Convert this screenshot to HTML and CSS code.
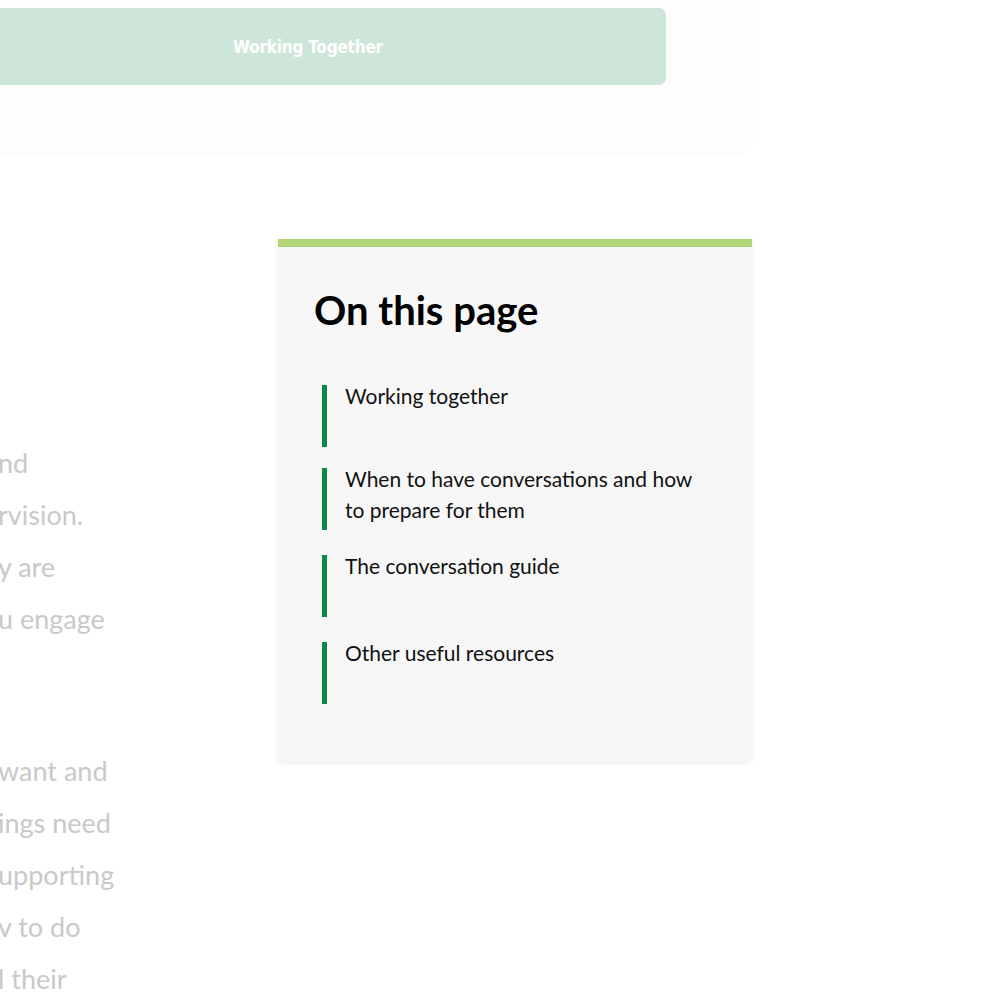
FILE: index.html
```html
<!DOCTYPE html>
<html lang="en">
<head>
    <meta charset="UTF-8">
    <meta name="viewport" content="width=device-width, initial-scale=1.0">
    <title>Working Together</title>
    <link rel="stylesheet" href="styles.css">
</head>
<body>
    <!-- Hero card -->
    <section class="hero">
        <a class="hero-button" href="#working-together">Working Together</a>
    </section>

    <!-- Main content -->
    <div class="content">
        <div class="article">
            <p>nd<br>rvision.<br>y are<br>u engage</p>
            <p>want and<br>ings need<br>upporting<br>v to do<br>l their</p>
        </div>

        <aside class="toc">
            <h2>On this page</h2>
            <ul class="toc-list">
                <li class="toc-item"><a href="#working-together">Working together</a></li>
                <li class="toc-item"><a href="#when">When to have conversations and how to prepare for them</a></li>
                <li class="toc-item"><a href="#guide">The conversation guide</a></li>
                <li class="toc-item"><a href="#resources">Other useful resources</a></li>
            </ul>
        </aside>
    </div>
</body>
</html>
```

FILE: styles.css
```css
* {
    box-sizing: border-box;
    margin: 0;
    padding: 0;
}

body {
    background-color: #ffffff;
    font-family: Lato, 'Noto Sans', sans-serif;
    color: #111111;
    overflow: hidden;
    height: 1000px;
}

.hero {
    width: 842px;
    height: 152px;
    margin-left: -90px;
    padding: 8px 86px 0 40px;
    background-color: #fdfdfd;
    border-radius: 0 0 14px 14px;
    box-shadow: 0 2px 6px rgba(0, 0, 0, 0.02);
}

.hero-button {
    display: flex;
    align-items: center;
    justify-content: center;
    height: 77px;
    border-radius: 7px;
    background-color: #cde6d9;
    color: #ffffff;
    text-decoration: none;
    font-family: 'DejaVu Sans Condensed', 'Liberation Sans Narrow', sans-serif;
    font-weight: bold;
    font-size: 17px;
    letter-spacing: -0.2px;
}

.content {
    display: grid;
    grid-template-columns: 250px 474px;
    column-gap: 28px;
    margin-top: 87px;
    align-items: start;
}

.article {
    padding-top: 198px;
    margin-left: -2px;
    overflow: hidden;
}

.article p {
    font-size: 27px;
    line-height: 52px;
    color: #c9c9c9;
    white-space: nowrap;
}

.article p + p {
    margin-top: 100px;
}

.toc {
    background-color: #f7f7f7;
    border-top: 8px solid #b3d57a;
    border-radius: 0 0 6px 6px;
    box-shadow: 0 1px 5px rgba(0, 0, 0, 0.09);
    padding: 39px 36px 58px 36px;
    min-height: 523px;
}

.toc h2 {
    font-size: 40px;
    font-weight: bold;
    color: #000000;
    line-height: 48px;
    margin-bottom: 51px;
}

.toc-list {
    list-style: none;
    padding-left: 8px;
    padding-right: 10px;
}

.toc-item {
    display: flex;
    gap: 18px;
}

.toc-item::before {
    content: "";
    flex-shrink: 0;
    width: 5px;
    height: 62px;
    background-color: #0b8a45;
}

.toc-item + .toc-item {
    margin-top: 25px;
}

.toc-item:nth-child(2) {
    margin-top: 21px;
}

.toc-item a {
    margin-top: -5px;
    font-size: 21px;
    line-height: 31px;
    color: #111111;
    text-decoration: none;
}
```
